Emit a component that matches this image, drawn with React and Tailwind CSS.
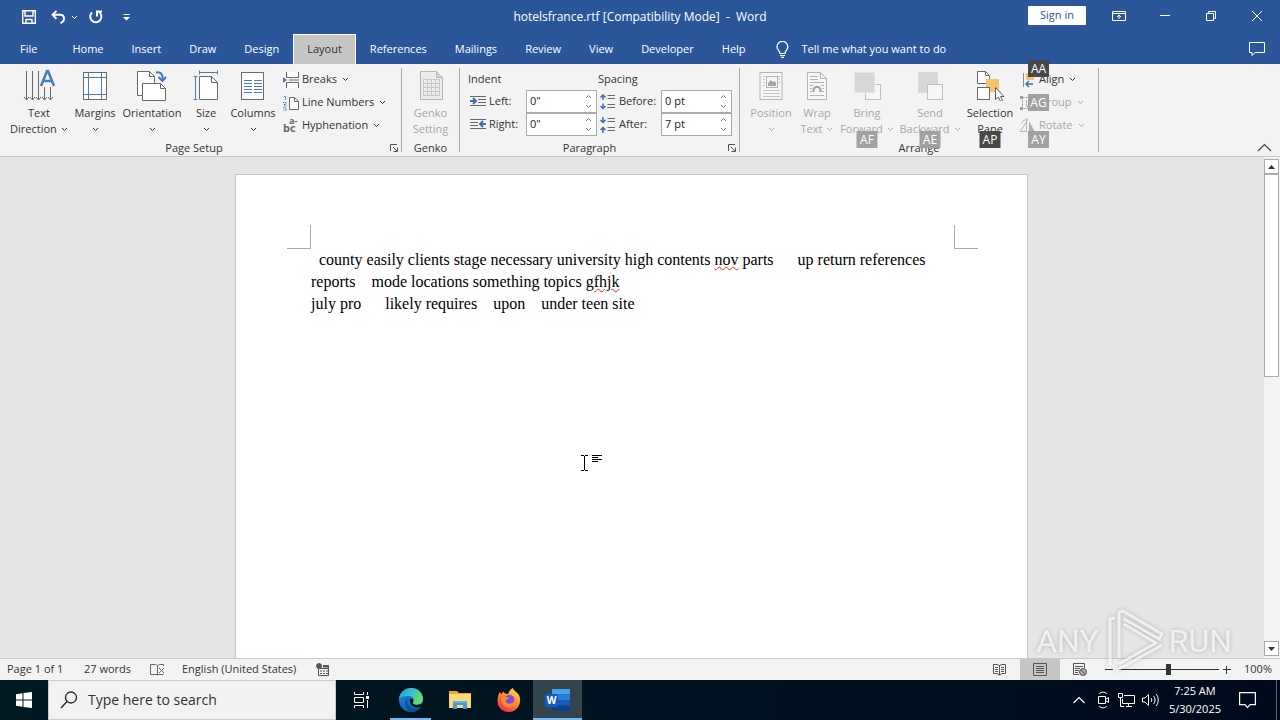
import { useState } from 'react';

const TABS = [
  'File', 'Home', 'Insert', 'Draw', 'Design', 'Layout', 'References',
  'Mailings', 'Review', 'View', 'Developer', 'Help',
];

const Chevron = ({ className = '' }) => (
  <svg className={`inline-block shrink-0 ${className}`} width="7" height="5" viewBox="0 0 7 5" fill="none" stroke="currentColor">
    <path d="M1 1l2.5 2.5L6 1" />
  </svg>
);

const Icon = ({ w = 32, h = 32, children }) => (
  <svg className="shrink-0" width={w} height={h} viewBox={`0 0 ${w} ${h}`} fill="none">
    {children}
  </svg>
);

/* ---------- Ribbon icons ---------- */

const TextDirectionIcon = () => (
  <Icon>
    <g stroke="#6a6a6a">
      <path d="M3.500 2v29M9.500 2v29M15.500 2v29M21.500 18v13M27.500 18v13" />
      <path d="M1 28l2.500 3 2.500-3M7 28l2.500 3 2.500-3M13 28l2.500 3 2.500-3M19 28l2.500 3 2.500-3M25 28l2.500 3 2.500-3" />
    </g>
    <path d="M18 17l6-15h1l6 15M20.500 12h8" stroke="#4a7ebb" strokeWidth="2.600" />
  </Icon>
);

const MarginsIcon = () => (
  <Icon>
    <rect x="4.500" y="3.500" width="23" height="27" fill="#fff" stroke="#6a6a6a" />
    <path d="M9.500 4v26M22.500 4v26M5 8.500h22M5 25.500h22" stroke="#4a7ebb" />
  </Icon>
);

const OrientationIcon = () => (
  <Icon>
    <path d="M1.500 2.500h12l5 5v19h-17z" fill="#fff" stroke="#6a6a6a" />
    <path d="M13.500 2.500v5h5" stroke="#6a6a6a" />
    <path d="M6.500 14.500h18l5 5v12h-23z" fill="#fff" stroke="#6a6a6a" />
    <path d="M24.500 14.500v5h5" stroke="#6a6a6a" />
    <path d="M20 3.500c5-1 7 2 6.500 7" stroke="#3f77b8" strokeWidth="2" />
    <path d="M22.500 8l4 4 3.500-4" stroke="#3f77b8" strokeWidth="2" />
  </Icon>
);

const SizeIcon = () => (
  <Icon>
    <path d="M9.500 3.500h18M9.500 1.500v4M27.500 1.500v4M5.500 7.500v23M3.500 7.500h4M3.500 30.500h4" stroke="#4a7ebb" />
    <path d="M9.500 7.500h12l6 6v17h-18z" fill="#fff" stroke="#6a6a6a" />
    <path d="M21.500 7.500v6h6" stroke="#6a6a6a" />
  </Icon>
);

const ColumnsIcon = () => (
  <Icon>
    <rect x="4.500" y="3.500" width="22" height="27" fill="#fff" stroke="#6a6a6a" />
    <path d="M7 11.500h8M17 11.500h8M7 14.500h8M17 14.500h8M7 17.500h8M17 17.500h8M7 20.500h8M17 20.500h8M7 23.500h8M17 23.500h8" stroke="#4a7ebb" />
  </Icon>
);

const BreaksIcon = () => (
  <Icon w={16} h={16}>
    <path d="M3.500 0v5.500h12V0M3.500 16v-5.500h12V16" fill="#fff" stroke="#6a6a6a" />
    <path d="M6 8h10" stroke="#6a6a6a" />
    <path d="M0 5l4 3-4 3z" fill="#4a7ebb" />
  </Icon>
);

const LineNumbersIcon = () => (
  <Icon w={16} h={16}>
    <path d="M6.500 2.500h5l4 4v8h-9z" fill="#fff" stroke="#6a6a6a" />
    <path d="M11.500 2.500v4h4" stroke="#6a6a6a" />
    <path d="M1 1.500h1.500V5M0 7.500h3v2H1v1.500h2.500M0 13h3v3H0" stroke="#4a7ebb" strokeDasharray="1.500 .5" />
  </Icon>
);

const HyphenationIcon = () => (
  <svg className="shrink-0 overflow-visible" width="16" height="16" viewBox="0 0 16 16" fill="#6a6a6a">
    <text x="6" y="6" fontSize="9" fontWeight="700" fontFamily="Open Sans, sans-serif">a-</text>
    <text x="0" y="14" fontSize="11" fontWeight="700" fontFamily="Open Sans, sans-serif">bc</text>
  </svg>
);

const GenkoIcon = () => (
  <Icon>
    <path d="M5.500 2.500h16l6 6v22h-22z" fill="#ececec" stroke="#b5b5b5" />
    <path d="M21.500 2.500v6h6" fill="#d5d5d5" stroke="#b5b5b5" />
    <path d="M8.500 10v17M12.500 10v17M16.500 10v17M20.500 10v17M24.500 10v17M8 10.500h17M8 14.500h17M8 18.500h17M8 22.500h17M8 26.500h17" stroke="#c8c8c8" />
  </Icon>
);

const IndentIcon = ({ right }) => (
  <Icon w={16} h={16}>
    {right ? (
      <>
        <path d="M0 2.500h16M0 5.500h8M0 8.500h8M0 11.500h16" stroke="#6a6a6a" />
        <path d="M16 7h-5M13 4l-3 3 3 3" stroke="#3f6fae" strokeWidth="2" />
      </>
    ) : (
      <>
        <path d="M0 2.500h16M8 5.500h8M8 8.500h8M0 11.500h16" stroke="#6a6a6a" />
        <path d="M0 7h5M3 4l3 3-3 3" stroke="#3f6fae" strokeWidth="2" />
      </>
    )}
  </Icon>
);

const SpacingIcon = ({ after }) => (
  <Icon w={16} h={16}>
    <path d="M7.500 1.500H15M7.500 4.500H15M7.500 10.500H15M7.500 13.500H15" stroke="#6a6a6a" />
    {after ? (
      <path d="M3 0v5M.5 3L3 5.500 5.500 3M3 16v-5M.5 13L3 10.500 5.500 13" stroke="#3f6fae" strokeWidth="1.500" />
    ) : (
      <path d="M3 6V1M.5 3.500L3 1l2.500 2.500M3 9.500v5M.5 12L3 14.500 5.500 12" stroke="#3f6fae" strokeWidth="1.500" />
    )}
  </Icon>
);

const PositionIcon = () => (
  <Icon>
    <rect x="5" y="3.500" width="22" height="27" fill="#f7f5f7" stroke="#b5b5b5" />
    <path d="M8 7.500h2M8 10.500h2M8 13.500h2M8 16.500h2M23 7.500h2M23 10.500h2M23 13.500h2M8 21.500h17M8 24.500h17M8 27.500h17" stroke="#c4c4c4" />
    <rect x="11.500" y="7.500" width="11" height="11" stroke="#b5b5b5" />
    <path d="M13 17v-3l3-3 2 2 1.500-1L21 14v3z" fill="#a5a5a5" />
  </Icon>
);

const WrapIcon = () => (
  <Icon>
    <path d="M6.500 3.500h13l6 6v21h-19z" fill="#f7f5f7" stroke="#b5b5b5" />
    <path d="M19.500 3.500v6h6M9 7.500h8M9 10.500h8M9 13.500h14M9 16.500h3M20 16.500h3M9 19.500h2M21 19.500h2M9 22.500h2M21 22.500h2M9 26.500h14" stroke="#b5b5b5" />
    <path d="M12.500 23c-1-7 8-7 7 0" stroke="#a0a0a0" strokeWidth="2" />
  </Icon>
);

const BringIcon = () => (
  <Icon>
    <rect x="14.500" y="15.500" width="15" height="15" fill="#f7f5f7" stroke="#c0c0c0" />
    <rect x="3" y="3" width="21" height="21" fill="#d8d6d8" stroke="#f3f3f3" />
  </Icon>
);

const SendIcon = () => (
  <Icon>
    <rect x="4" y="3" width="20" height="21" fill="#d8d6d8" />
    <rect x="13.500" y="15.500" width="15" height="15" fill="#f7f5f7" stroke="#c0c0c0" />
  </Icon>
);

const SelectionIcon = () => (
  <Icon>
    <path d="M3.500 2.500h8l4 4v8h-12z" fill="#fff" stroke="#6a6a6a" />
    <path d="M11.500 2.500v4h4" stroke="#6a6a6a" />
    <rect x="12" y="10" width="13" height="13" fill="#f5c36b" />
    <rect x="3.500" y="18.500" width="12" height="12" fill="#fff" stroke="#6a6a6a" />
    <path d="M21.500 18.500v12l3-2.500 2 4.500 2-1-2-4h3.500z" fill="#fff" stroke="#55606e" />
  </Icon>
);

const AlignIcon = () => (
  <Icon w={16} h={16}>
    <path d="M3.500 1v14" stroke="#7a8ea8" />
    <path d="M6 1h8v7H6z" fill="#f5c36b" />
    <path d="M13 12H6M9 9l-3 3 3 3" stroke="#3f6fae" strokeWidth="1.500" />
  </Icon>
);

const GroupIcon = () => (
  <Icon w={16} h={16}>
    <path d="M2.500 2.500h11v11h-11zM6.500 5.500v6h7" stroke="#9c9c9c" strokeDasharray="2 1" />
    <path d="M0 1h3v3H0zM13 1h3v3h-3zM0 12h3v3H0zM13 12h3v3h-3z" fill="#9c9c9c" />
  </Icon>
);

const RotateIcon = () => (
  <Icon w={16} h={16}>
    <path d="M0 13.500h6.500V4z" stroke="#b5b5b5" />
    <path d="M9 14V3l6 11z" fill="#b0b0b0" />
    <path d="M2 5.500C2 2 5 2 7.500 2M6 0l2 2-2 2" stroke="#b0b0b0" />
  </Icon>
);

/* ---------- Ribbon building blocks ---------- */

const KeyTip = ({ label, dim, className }) => (
  <span
    className={`absolute z-10 flex h-[17px] w-[21px] items-center justify-center text-xs text-white ${dim ? 'bg-[#9d9d9d]/95' : 'bg-[#484848]'} ${className}`}
  >
    {label}
  </span>
);

const BigButton = ({ icon, lines, menu, disabled, width, tip, tipDim }) => (
  <button
    disabled={disabled}
    className={`relative flex h-[71px] flex-col items-center leading-4 ${width} ${disabled ? 'text-[#aaa8aa]' : 'text-[#333]'}`}
  >
    <span className="flex h-9 items-start">{icon}</span>
    <span>{lines[0]}</span>
    <span className="flex h-4 items-center whitespace-nowrap">
      {lines[1]}
      {menu && <Chevron className={lines[1] ? 'ml-1' : ''} />}
    </span>
    {tip && <KeyTip label={tip} dim={tipDim} className="top-[62px] left-1/2 -translate-x-1/2" />}
  </button>
);

const SmallButton = ({ icon, label, disabled, tip, tipDim, tipClass }) => (
  <button
    disabled={disabled}
    className={`relative flex h-[23px] items-center gap-[3px] whitespace-nowrap ${disabled ? 'text-[#aaa8aa]' : 'text-[#333]'}`}
  >
    {icon}
    {label}
    <Chevron className="ml-0.5" />
    {tip && <KeyTip label={tip} dim={tipDim} className={tipClass} />}
  </button>
);

const Group = ({ title, launcher, className = '', children }) => (
  <section className={`flex h-[92px] flex-col ${className}`}>
    <div className="flex h-[76px] pt-[5px]">{children}</div>
    <div className={`relative h-4 text-center leading-4 text-[#333] ${launcher ? 'pr-5' : ''}`}>
      {title}
      {launcher && (
        <button aria-label={`${title} settings`} className="absolute top-1 right-[3px]">
          <svg width="8" height="8" viewBox="0 0 8 8" fill="none" stroke="#555">
            <path d="M.5 7V.5H7M3 3l4 4M7.500 3.500v4h-4" />
          </svg>
        </button>
      )}
    </div>
  </section>
);

const Divider = () => <div className="my-1 w-px bg-[#ababab]" />;

const Spinner = ({ id, label, icon, initial, labelWidth }) => {
  const [value, setValue] = useState(initial);
  return (
    <div className="flex h-[23px] items-center">
      <label htmlFor={id} className={`flex items-center gap-[3px] text-[#333] ${labelWidth}`}>
        {icon}
        {label}
      </label>
      <div className="flex h-[23px] w-[71px] border border-[#ababab] bg-white">
        <input
          id={id}
          value={value}
          onChange={(e) => setValue(e.target.value)}
          className="w-full min-w-0 flex-1 pl-[3px] text-[#222] outline-none"
        />
        <div className="flex w-4 flex-col items-center justify-between py-[3px] text-[#777]">
          <button aria-label={`Increase ${label}`} className="flex">
            <Chevron className="rotate-180" />
          </button>
          <button aria-label={`Decrease ${label}`} className="flex">
            <Chevron />
          </button>
        </div>
      </div>
    </div>
  );
};

/* ---------- Window sections ---------- */

const WindowButton = ({ label, children }) => (
  <button aria-label={label} className="flex h-[30px] w-[46px] items-center justify-center">
    <svg width="14" height="12" viewBox="0 0 14 12" fill="none" stroke="#fff">{children}</svg>
  </button>
);

const TitleBar = () => (
  <header className="flex h-[34px] shrink-0 items-center">
    <div className="flex flex-1 items-center">
      <button aria-label="Save" className="mr-[15px] ml-[22px]">
        <svg width="14" height="14" viewBox="0 0 14 14" fill="none" stroke="#fff" strokeWidth="1.400">
          <path d="M.7.7h12.600v12.600H.7zM3 1v5h8V1M4 13V9.500h6V13" />
        </svg>
      </button>
      <button aria-label="Undo">
        <svg width="15" height="14" viewBox="0 0 15 14" fill="none" stroke="#fff" strokeWidth="1.900">
          <path d="M5.500.8L1.500 4.800l4 4M1.500 4.800H9c5 0 5.500 6.500.5 8.200" />
        </svg>
      </button>
      <button aria-label="Undo history" className="mr-[11px] ml-[5px] text-white">
        <Chevron />
      </button>
      <button aria-label="Repeat">
        <svg width="14" height="14" viewBox="0 0 14 14" fill="none" stroke="#fff" strokeWidth="1.900">
          <path d="M3 2.500A5.600 5.600 0 1 0 10 2M8 6.500V1.500h5" />
        </svg>
      </button>
      <button aria-label="Customize Quick Access Toolbar" className="ml-5">
        <svg width="7" height="7" viewBox="0 0 7 7" fill="#fff">
          <path d="M.5 0h6v1h-6zM0 3h7L3.500 6.500z" />
        </svg>
      </button>
    </div>
    <h1 className="text-xs whitespace-pre text-white">hotelsfrance.rtf [Compatibility Mode]  -  Word</h1>
    <div className="flex flex-1 items-center justify-end pb-[3px]">
      <button className="mr-[10px] h-[19px] w-[58px] rounded-[1px] bg-white text-[#2b579a]">Sign in</button>
      <WindowButton label="Ribbon display options">
        <path d="M.5 1.500h13v9H.5zM.5 3.500h13M7 9V5M5 7l2-2 2 2" />
      </WindowButton>
      <WindowButton label="Minimize">
        <path d="M2 5.500h10" />
      </WindowButton>
      <WindowButton label="Restore">
        <path d="M2.500 3.500h7v7h-7zM4.500 3V1.500h7v7H10" />
      </WindowButton>
      <WindowButton label="Close">
        <path d="M2 1l10 10M12 1L2 11" />
      </WindowButton>
    </div>
  </header>
);

const TabBar = ({ active, onSelect }) => (
  <nav className="flex h-[30px] shrink-0 items-stretch pl-1.5">
    {TABS.map((tab) => (
      <button
        key={tab}
        onClick={() => onSelect(tab)}
        className={`border px-[13px] ${tab === 'File' ? 'mr-[7px]' : ''} ${
          tab === active ? 'border-b-0 border-white bg-[#c6c6c6] text-[#333]' : 'border-transparent text-white'
        }`}
      >
        {tab}
      </button>
    ))}
    <button className="ml-4 flex items-center gap-[13px] text-white">
      <svg width="13" height="17" viewBox="0 0 13 17" fill="none" stroke="#fff" strokeWidth="1.200">
        <path d="M4 12.500C4 9.500 1 9 1 5.800a5.400 5.400 0 0 1 10.800 0C11.800 9 9 9.500 9 12.500zM4 14.500h5M5 16.400h3" />
      </svg>
      Tell me what you want to do
    </button>
    <button aria-label="Comments" className="mr-[15px] ml-auto">
      <svg width="16" height="15" viewBox="0 0 16 15" fill="none" stroke="#fff">
        <path d="M.5.5h15v10H6l-3 3v-3H.5z" />
      </svg>
    </button>
  </nav>
);

const Ribbon = () => (
  <div className="flex h-[93px] shrink-0 border-b border-[#c9c9c9] bg-[#f3f3f3]">
    <Group title="Page Setup" launcher className="w-[401px] pl-[7px]">
      <BigButton icon={<TextDirectionIcon />} lines={['Text', 'Direction']} menu width="w-16" />
      <BigButton icon={<MarginsIcon />} lines={['Margins']} menu width="w-12" />
      <BigButton icon={<OrientationIcon />} lines={['Orientation']} menu width="w-[66px]" />
      <BigButton icon={<SizeIcon />} lines={['Size']} menu width="w-[42px]" />
      <BigButton icon={<ColumnsIcon />} lines={['Columns']} menu width="w-[52px]" />
      <div className="-mt-px ml-1 flex flex-col items-start">
        <SmallButton icon={<BreaksIcon />} label="Breaks" />
        <SmallButton icon={<LineNumbersIcon />} label="Line Numbers" />
        <SmallButton icon={<HyphenationIcon />} label="Hyphenation" />
      </div>
    </Group>
    <Divider />
    <Group title="Genko" className="w-[57px]">
      <BigButton icon={<GenkoIcon />} lines={['Genko', 'Setting']} disabled width="w-full" />
    </Group>
    <Divider />
    <Group title="Paragraph" launcher className="w-[279px]">
      <div className="-mt-0.5 flex">
        <div className="ml-[10px]">
          <div className="-ml-0.5 h-[23px] leading-[23px] text-[#333]">Indent</div>
          <Spinner id="indent-left" label="Left:" icon={<IndentIcon />} initial={'0"'} labelWidth="w-14" />
          <Spinner id="indent-right" label="Right:" icon={<IndentIcon right />} initial={'0"'} labelWidth="w-14" />
        </div>
        <div className="ml-[3px]">
          <div className="-ml-0.5 h-[23px] leading-[23px] text-[#333]">Spacing</div>
          <Spinner id="space-before" label="Before:" icon={<SpacingIcon />} initial="0 pt" labelWidth="w-[61px]" />
          <Spinner id="space-after" label="After:" icon={<SpacingIcon after />} initial="7 pt" labelWidth="w-[61px]" />
        </div>
      </div>
    </Group>
    <Divider />
    <Group title="Arrange" className="w-[358px] px-2">
      <BigButton icon={<PositionIcon />} lines={['Position']} menu disabled width="w-[46px]" />
      <BigButton icon={<WrapIcon />} lines={['Wrap', 'Text']} menu disabled width="w-[46px]" />
      <BigButton icon={<BringIcon />} lines={['Bring', 'Forward']} menu disabled width="w-[54px]" tip="AF" tipDim />
      <BigButton icon={<SendIcon />} lines={['Send', 'Backward']} menu disabled width="w-[72px]" tip="AE" tipDim />
      <BigButton icon={<SelectionIcon />} lines={['Selection', 'Pane']} width="w-12" tip="AP" />
      <div className="-mt-px ml-1.5 flex flex-col items-start">
        <SmallButton icon={<AlignIcon />} label="Align" tip="AA" tipClass="-top-2 left-2" />
        <SmallButton icon={<GroupIcon />} label="Group" disabled tip="AG" tipDim tipClass="top-[3px] left-2" />
        <SmallButton icon={<RotateIcon />} label="Rotate" disabled tip="AY" tipDim tipClass="top-[17px] left-2" />
      </div>
    </Group>
    <Divider />
    <button aria-label="Collapse the Ribbon" className="mt-auto mr-2 mb-1 ml-auto">
      <svg width="15" height="9" viewBox="0 0 15 9" fill="none" stroke="#444" strokeWidth="1.200">
        <path d="M1 8l6.500-6.500L14 8" />
      </svg>
    </button>
  </div>
);

const Misspelled = ({ children }) => (
  <span className="underline decoration-[#f02020] decoration-wavy decoration-1 underline-offset-1">{children}</span>
);

const DocumentArea = () => (
  <main className="relative flex min-h-0 flex-1 bg-[#e6e6e6]">
    <div className="min-w-0 flex-1 overflow-hidden pt-[17px] pr-px">
      <article className="mx-auto h-[1123px] w-[793px] border border-[#c6c6c6] bg-white pt-[50px]">
        <div className="flex justify-between pr-[49px] pl-[51px]">
          <div className="size-6 border-r border-b border-[#ababab]" />
          <div className="size-6 border-b border-l border-[#ababab]" />
        </div>
        <div className="pl-[75px] font-['Liberation_Serif',serif] text-base leading-[22px] whitespace-pre text-black">
          <p>
            {'  county easily clients stage necessary university high contents '}
            <Misspelled>nov</Misspelled>
            {' parts      up return references'}
          </p>
          <p>
            {'reports    mode locations something topics '}
            <Misspelled>gfhjk</Misspelled>
          </p>
          <p>{'july pro      likely requires    upon    under teen site'}</p>
        </div>
      </article>
    </div>
    <div className="flex w-4 flex-col bg-[#f3f3f3] pt-0.5 pr-px pb-0.5">
      <button aria-label="Scroll up" className="flex h-[15px] items-center justify-center border border-[#ababab] bg-white">
        <svg width="7" height="4" viewBox="0 0 7 4" fill="#333"><path d="M0 4h7L3.500 0z" /></svg>
      </button>
      <div className="h-[203px] border border-[#ababab] bg-white" />
      <button aria-label="Scroll down" className="mt-auto flex h-[15px] items-center justify-center border border-[#ababab] bg-white">
        <svg width="7" height="4" viewBox="0 0 7 4" fill="#333"><path d="M0 0h7L3.500 4z" /></svg>
      </button>
    </div>
    {/* I-beam pointer */}
    <svg className="absolute top-[297px] left-[580px]" width="23" height="18" viewBox="0 0 23 18" fill="none" stroke="#000" shapeRendering="crispEdges">
      <path d="M1 1.500h3M5 1.500h3M4.500 2v14M1 16.500h3M5 16.500h3M12 1.500h10M12 3.500h6M12 5.500h10M12 7.500h6" />
    </svg>
  </main>
);

const StatusBar = () => {
  const [zoom, setZoom] = useState(50);
  return (
    <footer className="flex h-[22px] shrink-0 items-center border-t border-[#c9c9c9] bg-[#f3f3f3] pr-2 pl-[7px] text-[#333]">
      <span className="w-[77px]">Page 1 of 1</span>
      <span className="w-[66px]">27 words</span>
      <button aria-label="Proofing errors" className="mr-[17px]">
        <svg width="15" height="13" viewBox="0 0 15 13" fill="none" stroke="#666">
          <path d="M7.500 11.500H.5v-10h5l2 1v10M7.500 2.500l2-1h4V3M7.500 11.500h6M9 5l5 5M14 5l-5 5" />
        </svg>
      </button>
      <button className="mr-5">English (United States)</button>
      <button aria-label="Record macro">
        <svg width="13" height="13" viewBox="0 0 13 13" fill="none" stroke="#555">
          <path d="M2.500 6v6.500h10v-10H7M3 5.500h9M4 8h2M7 8h2M10 8h2M4 10.500h2M7 10.500h2M10 10.500h2" />
          <path d="M7 3.500h5" strokeWidth="2" />
          <circle cx="3" cy="3" r="2.500" fill="#555" />
        </svg>
      </button>
      <div className="ml-auto flex items-center">
        <button aria-label="Read Mode" className="flex h-[21px] w-10 items-center justify-center">
          <svg width="14" height="13" viewBox="0 0 14 13" fill="none" stroke="#555">
            <path d="M6.500 2.500L4 1.500H.5v9H4l2.500 1.500L9 10.500h3.500v-9H9zM6.500 2v10M2 4.500h3M2 6.500h3M2 8.500h3M8 4.500h3M8 6.500h3M8 8.500h3" />
          </svg>
        </button>
        <button aria-label="Print Layout" className="flex h-[21px] w-10 items-center justify-center bg-[#c6c6c6]">
          <svg width="14" height="13" viewBox="0 0 14 13" fill="none" stroke="#555">
            <path d="M.5.5h13v12H.5zM3 3.500h8M3 5.500h8M3 7.500h8M3 9.500h8" />
          </svg>
        </button>
        <button aria-label="Web Layout" className="flex h-[21px] w-10 items-center justify-center">
          <svg width="14" height="13" viewBox="0 0 14 13" fill="none" stroke="#555">
            <path d="M6 11.500H.5V.5h11V5M2 3.500h8M2 5.500h5M2 7.500h4M2 9.500h3" />
            <circle cx="10" cy="9" r="3.500" fill="#aaa" />
            <path d="M8 7l4 4" />
          </svg>
        </button>
        <button aria-label="Zoom out" className="mx-[5px]">
          <svg width="8" height="8" viewBox="0 0 8 8" stroke="#333"><path d="M0 3.500h8" /></svg>
        </button>
        <input
          type="range"
          aria-label="Zoom"
          value={zoom}
          onChange={(e) => setZoom(Number(e.target.value))}
          className="h-3 w-[101px] appearance-none bg-transparent [&::-webkit-slider-runnable-track]:h-px [&::-webkit-slider-runnable-track]:bg-[#333] [&::-webkit-slider-thumb]:-mt-[5px] [&::-webkit-slider-thumb]:h-[11px] [&::-webkit-slider-thumb]:w-[5px] [&::-webkit-slider-thumb]:appearance-none [&::-webkit-slider-thumb]:bg-[#333]"
        />
        <button aria-label="Zoom in" className="mr-[13px] ml-1">
          <svg width="8" height="8" viewBox="0 0 8 8" stroke="#333"><path d="M0 3.500h8M3.500 0v8" /></svg>
        </button>
        <span>100%</span>
      </div>
    </footer>
  );
};

/* ---------- Windows taskbar ---------- */

const TaskButton = ({ label, running, active, children }) => (
  <button
    aria-label={label}
    className={`relative flex h-10 w-[49px] items-center justify-center ${active ? 'bg-[#33444c]' : ''}`}
  >
    {children}
    {running && <span className={`absolute bottom-0 h-0.5 bg-[#76b9ed] ${active ? 'inset-x-0' : 'inset-x-1'}`} />}
  </button>
);

const EdgeLogo = () => (
  <svg width="26" height="26" viewBox="0 0 26 26">
    <defs>
      <linearGradient id="edgeTop" x1="0" y1="0" x2="1" y2="0.400">
        <stop offset="0" stopColor="#2a9fe0" />
        <stop offset="0.550" stopColor="#35c1c9" />
        <stop offset="1" stopColor="#66dd63" />
      </linearGradient>
      <linearGradient id="edgeBody" x1="0" y1="0" x2="0.600" y2="1">
        <stop offset="0" stopColor="#1b8fe0" />
        <stop offset="1" stopColor="#0f5cab" />
      </linearGradient>
    </defs>
    <circle cx="13" cy="13" r="12" fill="url(#edgeBody)" />
    <path d="M1 12C2 5 7 1 13 1c7 0 12 5 12 10.500 0 4-3 6.500-6.500 6.500-3 0-4.500-1.200-3.500-2.500 1.800-2.300.5-6.500-4.500-6.500C6 9 2.500 10 1 12z" fill="url(#edgeTop)" />
    <path d="M10.500 9.500C8 12 8.500 18 13 21c3 2 7 1.500 10-1-2 3.500-6 5-9.500 5C7 23 5 14 10.500 9.500z" fill="#0d4f94" />
    <path d="M12 12c1.500-1 3.500 0 3.500 1.800 0 1-.8 1.500-.5 2.400.6 1.500 3 1.800 5 1.600 2.200-.2 3.500-.9 4.700-1.800L24 19.500c-4 1.800-8 1-10-1-2-1.800-2.800-4.800-2-6.500z" fill="#001922" />
  </svg>
);

const ExplorerLogo = () => (
  <svg width="22" height="20" viewBox="0 0 22 20">
    <path d="M0 1h8l2 2h12v15H0z" fill="#e9a92c" />
    <path d="M0 4h22v14H0z" fill="#fcd877" />
    <path d="M4 19v-8h14v8h-4v-4H8v4z" fill="#3d9be0" />
    <path d="M4 11h14v2H4z" fill="#65b5ea" />
  </svg>
);

const FirefoxLogo = () => (
  <svg width="24" height="24" viewBox="0 0 24 24">
    <defs>
      <linearGradient id="fox" x1="0.800" y1="0" x2="0.200" y2="1">
        <stop offset="0" stopColor="#ffe14a" />
        <stop offset="0.450" stopColor="#ff8a24" />
        <stop offset="1" stopColor="#f0255c" />
      </linearGradient>
    </defs>
    <path d="M3 3.500c0 1.500.5 2 1.500 2.500.5-1 1.200-2 2-2.500 0 1.500 2.500 2.500 4.500 2.500 1-3 2.500-5 5-6 0 3 6 4 7 10 1 8-4 14-11 14S0 19 .5 12C.7 9 1.500 5.500 3 3.500z" fill="url(#fox)" />
    <circle cx="12.500" cy="12" r="5" fill="#7a4be0" />
    <path d="M4.500 9c3-1 5 .5 8 .5-1 2-3 1.500-4 3 0 2.500 2.500 3.500 5 3 3-.5 4.500-3 3.500-6 3 3 2 9-3.500 10C7 20 3 15 4.500 9z" fill="#ff8a2c" />
  </svg>
);

const WordLogo = () => (
  <svg width="26" height="22" viewBox="0 0 26 22">
    <path d="M7 0h18v5.500H7z" fill="#41a5ee" />
    <path d="M7 5.500h18V11H7z" fill="#2b7cd3" />
    <path d="M7 11h18v5.500H7z" fill="#185abd" />
    <path d="M7 16.500h18V22H7z" fill="#103f91" />
    <rect x="0" y="5" width="13" height="13" rx="1" fill="#185abd" />
    <text x="6.500" y="15" textAnchor="middle" fontSize="10" fontWeight="700" fill="#fff" fontFamily="Open Sans, sans-serif">W</text>
  </svg>
);

const Taskbar = () => (
  <div className="flex h-10 shrink-0 items-center bg-linear-to-r from-[#001a22] to-[#000a1c] text-white">
    <button aria-label="Start" className="flex h-10 w-12 items-center justify-center">
      <svg width="16" height="16" viewBox="0 0 16 16" fill="#fff">
        <path d="M0 2.200L6.500 1.300V7.500H0zM7.500 1.100L16 0v7.500H7.500zM0 8.500h6.500v6.200L0 13.800zM7.500 8.500H16V16l-8.500-1.100z" />
      </svg>
    </button>
    <label className="mr-px flex h-10 w-72 items-center gap-[10px] border border-[#c9c9c9] bg-[#f2f2f2] pl-[11px]">
      <svg width="18" height="18" viewBox="0 0 18 18" fill="none" stroke="#222" strokeWidth="1.300">
        <circle cx="11" cy="6.500" r="5.500" />
        <path d="M7 10.500L1 17" />
      </svg>
      <input aria-label="Search" placeholder="Type here to search" className="min-w-0 flex-1 bg-transparent text-sm outline-none placeholder:text-[#333]" />
    </label>
    <TaskButton label="Task View">
      <svg width="17" height="16" viewBox="0 0 17 16" fill="none" stroke="#fff">
        <path d="M1.500 0v2.500h9V0M1.500 5.500h9v5h-9zM1.500 16v-2.500h9V16M14.500 0v3M14.500 8v8" />
        <path d="M13 4h3v3h-3z" fill="#fff" stroke="none" />
      </svg>
    </TaskButton>
    <TaskButton label="Microsoft Edge" running><EdgeLogo /></TaskButton>
    <TaskButton label="File Explorer"><ExplorerLogo /></TaskButton>
    <TaskButton label="Firefox"><FirefoxLogo /></TaskButton>
    <TaskButton label="Word" running active><WordLogo /></TaskButton>
    <div className="ml-auto flex h-10 items-center">
      <button aria-label="Show hidden icons" className="mr-[10px]">
        <svg width="12" height="8" viewBox="0 0 12 8" fill="none" stroke="#fff" strokeWidth="1.200"><path d="M.5 7L6 1.500 11.500 7" /></svg>
      </button>
      <button aria-label="Meet Now" className="mr-[7px]">
        <svg width="16" height="18" viewBox="0 0 16 18" fill="none" stroke="#fff">
          <path d="M3.500 5.500h7v7h-7zM10.500 8.500l3-2v5l-3-2M4 3C6 .5 10 .5 12 3M4 15c2 2.500 6 2.500 8 0" />
        </svg>
      </button>
      <button aria-label="Network" className="mr-[7px]">
        <svg width="17" height="16" viewBox="0 0 17 16" fill="none" stroke="#fff">
          <path d="M6 3.500h10.500v8h-12V7M8 14.500h6M10.500 12v2M.5 1.500h4v4h-4zM2.500 6v8.500H6" />
        </svg>
      </button>
      <button aria-label="Volume" className="mr-[10px]">
        <svg width="17" height="14" viewBox="0 0 17 14" fill="none" stroke="#fff">
          <path d="M.5 5v4h2.500l3.500 3.500v-11L3 5zM9 5c1 1 1 3 0 4M11.500 3c2 2 2 6 0 8M14 1c3 3 3 9 0 12" />
        </svg>
      </button>
      <div className="mr-[18px] text-center leading-[18px]">
        <div>7:25 AM</div>
        <div>5/30/2025</div>
      </div>
      <button aria-label="Notifications" className="mr-5">
        <svg width="17" height="17" viewBox="0 0 17 17" fill="none" stroke="#fff" strokeWidth="1.200">
          <path d="M.6.6h15.800v12H11l-2.500 3-2.500-3H.6z" />
        </svg>
      </button>
      <div className="mr-[3px] h-10 w-px bg-[#5a6470]" />
    </div>
  </div>
);

const Watermark = () => (
  <div className="pointer-events-none absolute right-12 bottom-[46px] z-20 flex items-center gap-1 font-['Liberation_Sans_Narrow','Roboto',sans-serif] text-[32px] text-white/70 drop-shadow-[0_0_2px_rgba(0,0,0,0.3)]">
    <span>ANY</span>
    <svg width="62" height="66" viewBox="0 0 62 66" fill="none" stroke="#fff" strokeOpacity="0.700" strokeWidth="3" strokeLinejoin="round">
      <path d="M16 50V4l4-1 39 23-3 5-35-20M21 16l32 19-37 21M59 37L14 62M12 10l-5 1v46" />
    </svg>
    <span>RUN</span>
  </div>
);

export default function App() {
  const [tab, setTab] = useState('Layout');

  return (
    <div className="relative flex h-screen flex-col overflow-hidden bg-[#2b579a] font-['Open_Sans',sans-serif] text-[11px]">
      <TitleBar />
      <TabBar active={tab} onSelect={setTab} />
      <Ribbon />
      <DocumentArea />
      <StatusBar />
      <Taskbar />
      <Watermark />
    </div>
  );
}
